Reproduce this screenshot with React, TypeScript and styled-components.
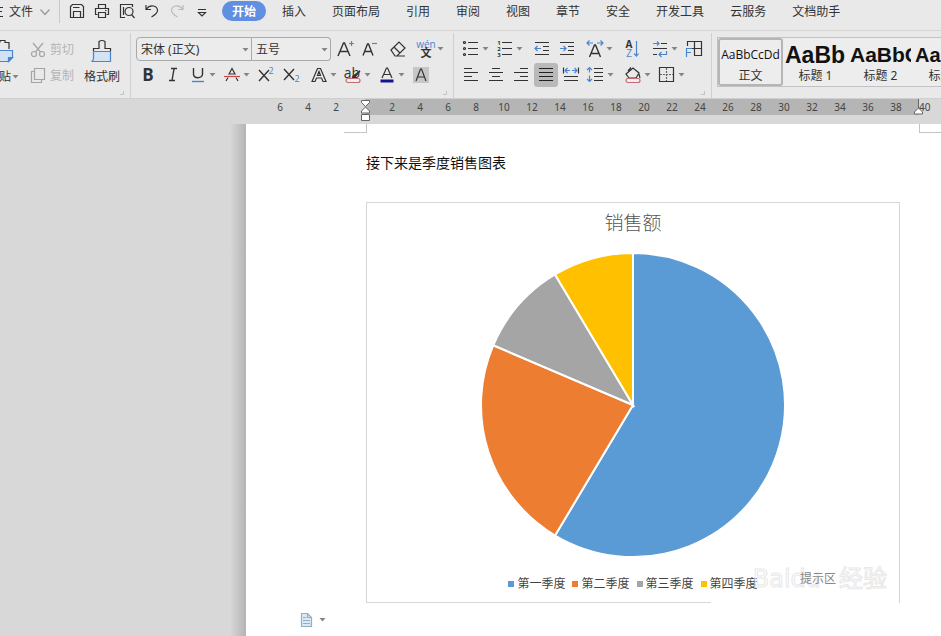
import React from "react";
import styled, { createGlobalStyle, css } from "styled-components";

const Global = createGlobalStyle`
  * { box-sizing: border-box; }
  html, body { margin: 0; height: 100%; }
  #root { height: 100%; }
  body, button, select { font-family: "Noto Sans", "Noto Sans CJK SC", sans-serif; font-size: 12px; color: #333; }
  button { margin: 0; padding: 0; border: 0; background: none; line-height: 16px; white-space: nowrap; }
`;

const Shell = styled.div`
  display: flex;
  flex-direction: column;
  min-height: 100%;
  overflow: hidden;
  background: #d8d8d8;
`;

const MenuBar = styled.nav`
  display: flex;
  align-items: center;
  height: 31px;
  padding-bottom: 8px;
  border-bottom: 1px solid #d6d6d6;
  background: #e9e9e9;
  flex: none;
`;

const FileButton = styled.button`
  display: flex;
  align-items: center;
  gap: 6px;
  width: 60px;
  height: 24px;
  flex: none;
  border-right: 1px solid #c9c9c9;
  overflow: hidden;
  justify-content: flex-end;
  padding: 1px 8px 0 0;
`;

const QuickTools = styled.div`
  display: flex;
  gap: 5px;
  padding-left: 7px;
  width: 162px;
  flex: none;
`;

const QuickButton = styled.button`
  width: 20px;
  height: 20px;
  flex: none;
`;

const Tabs = styled.div`
  display: flex;
  align-items: center;
  gap: 26px;
`;

const Tab = styled.button<{ $active?: boolean }>`
  flex: none;
  height: 20px;
  padding-top: 1px;
  ${(p) =>
    p.$active &&
    css`
      width: 44px;
      margin-right: -10px;
      border-radius: 10px;
      background: #5e8fe0;
      color: #fff;
      font-weight: 700;
    `}
`;

const Ribbon = styled.div`
  display: flex;
  height: 68px;
  flex: none;
  padding: 2px 0 0;
  background: #e9e9e9;
  border-bottom: 1px solid #cfcfcf;
  overflow: hidden;
`;

const Group = styled.section<{ $w: number }>`
  display: flex;
  flex: none;
  width: ${(p) => p.$w}px;
  position: relative;
  border-right: 1px solid #cfcfcf;
`;

const Corner = styled.span`
  position: absolute;
  right: 6px;
  bottom: 3px;
  width: 4px;
  height: 4px;
  border: solid #c4c4c4;
  border-width: 0 1px 1px 0;
`;

const PasteButton = styled.button`
  display: flex;
  flex-direction: column;
  align-items: flex-start;
  width: 20px;
  padding-top: 6px;
  gap: 6px;
  overflow: hidden;
`;

const PasteLabel = styled.span`
  display: flex;
  align-items: center;
  justify-content: flex-end;
  width: 20px;
`;

const ClipColumn = styled.div`
  display: flex;
  flex-direction: column;
  gap: 6px;
  padding: 6px 0 0 10px;
  width: 64px;
`;

const ClipButton = styled.button`
  display: flex;
  align-items: center;
  gap: 4px;
  height: 20px;
  padding-top: 2px;
  color: #b5b5b5;
`;

const BrushButton = styled.button`
  display: flex;
  flex-direction: column;
  align-items: center;
  gap: 6px;
  width: 36px;
  padding-top: 6px;
`;

const Rows = styled.div<{ $pad: number }>`
  display: flex;
  flex-direction: column;
  gap: 2px;
  padding: 4px 0 0 ${(p) => p.$pad}px;
`;

const ToolRow = styled.div<{ $pad?: number }>`
  display: flex;
  align-items: center;
  height: 24px;
  padding-left: ${(p) => p.$pad || 0}px;
`;

const Combo = styled.span<{ $w: number; $side: "left" | "right" }>`
  display: flex;
  align-items: center;
  width: ${(p) => p.$w}px;
  height: 24px;
  border: 1px solid #a9a9a9;
  border-radius: ${(p) => (p.$side === "left" ? "4px 0 0 4px" : "0 4px 4px 0")};
  border-left-width: ${(p) => (p.$side === "left" ? 1 : 0)}px;
  background: #ececec;
  padding: 1px 1px 0 0;
`;

const Select = styled.select`
  appearance: none;
  flex: 1;
  min-width: 0;
  height: 20px;
  padding: 0 0 0 4px;
  border: 0;
  background: transparent;
`;

const Tool = styled.button<{ $w: number }>`
  display: flex;
  align-items: center;
  flex: none;
  width: ${(p) => p.$w}px;
  height: 24px;
`;

const IconBox = styled.span<{ $on?: boolean }>`
  display: flex;
  flex: none;
  justify-content: center;
  align-items: center;
  width: ${(p) => (p.$on ? 24 : 20)}px;
  height: 24px;
  margin: ${(p) => (p.$on ? "0 -2px" : "0")};
  border-radius: 3px;
  background: ${(p) => (p.$on ? "#b9b9b9" : "transparent")};
`;

const Glyph = styled.svg`
  display: block;
  flex: none;
  overflow: visible;
`;

const Gallery = styled.div`
  display: flex;
  flex: none;
  height: 50px;
  margin: 4px 0 0 5px;
  border: solid #c2c2c2;
  border-width: 1px 0 1px 1px;
  background: #ededed;
`;

const StyleTile = styled.button<{ $active?: boolean }>`
  display: flex;
  flex-direction: column;
  align-items: center;
  justify-content: flex-end;
  flex: none;
  width: 65px;
  overflow: hidden;
  border: 2px solid ${(p) => (p.$active ? "#b5b5b5" : "transparent")};
  border-radius: 3px;
`;

const Sample = styled.span<{ $size: number; $bold?: boolean }>`
  display: flex;
  align-items: center;
  align-self: stretch;
  justify-content: ${(p) => (p.$bold ? "flex-start" : "center")};
  height: 26px;
  overflow: hidden;
  color: #111;
  font-family: ${(p) => (p.$bold ? '"Liberation Sans"' : '"Open Sans"')}, sans-serif;
  font-size: ${(p) => p.$size}px;
  font-weight: ${(p) => (p.$bold ? 700 : 400)};
`;

const Ruler = styled.div`
  display: flex;
  flex: none;
  height: 25px;
  padding-left: 266px;
  color: #444;
  font-size: 10px;
  line-height: 16px;
  overflow: hidden;
`;

const Band = styled.div<{ $dark?: boolean }>`
  display: flex;
  flex: none;
  position: relative;
  height: 16px;
  padding-left: ${(p) => (p.$dark ? 13 : 0)}px;
  width: ${(p) => (p.$dark ? 554 : 99)}px;
  background: ${(p) => (p.$dark ? "#b5b5b5" : "transparent")};
`;

const Mark = styled.span`
  flex: none;
  width: 28px;
  text-align: center;
`;

const IndentMarker = styled.svg<{ $end?: boolean }>`
  position: absolute;
  top: 0;
  left: ${(p) => (p.$end ? "auto" : "-5px")};
  right: ${(p) => (p.$end ? "-5px" : "auto")};
`;

const Desk = styled.main`
  display: flex;
  flex: 1;
  padding-left: 230px;
`;

const Shade = styled.div`
  flex: none;
  width: 16px;
  background: linear-gradient(to right, #d8d8d8, #b4b4b4);
`;

const Page = styled.article`
  display: flex;
  flex-direction: column;
  flex: 1;
  min-width: 0;
  min-height: 512px;
  background: #fff;
`;

const Crops = styled.div`
  display: flex;
  gap: 552px;
  height: 9px;
  padding-left: 98px;
  overflow: hidden;
`;

const Crop = styled.span<{ $right?: boolean }>`
  flex: none;
  width: 23px;
  border: solid #c4c4c4;
  border-width: ${(p) => (p.$right ? "0 0 1px 1px" : "0 1px 1px 0")};
`;

const Paragraph = styled.p`
  margin: 20px 0 0 120px;
  color: #111;
  font-family: "Liberation Serif", "Noto Sans CJK SC", sans-serif;
  font-size: 14px;
  line-height: 22px;
`;

const Chart = styled.figure`
  display: flex;
  flex-direction: column;
  align-items: center;
  position: relative;
  width: 534px;
  height: 401px;
  margin: 27px 0 0 120px;
  border: 1px solid #d6d6d6;
  &::after {
    content: "";
    position: absolute;
    right: 0;
    bottom: -1px;
    width: 188px;
    height: 1px;
    background: #fff;
  }
`;

const ChartTitle = styled.figcaption`
  margin-top: 7px;
  color: #555;
  font-size: 19px;
  font-weight: 300;
  line-height: 26px;
`;

const Pie = styled.svg`
  flex: none;
  margin-top: 16px;
`;

const Legend = styled.ul`
  display: flex;
  gap: 7px;
  margin: 16px 0 0;
  padding: 0;
  list-style: none;
  color: #444;
  line-height: 20px;
`;

const LegendItem = styled.li<{ $c: string }>`
  display: flex;
  align-items: center;
  gap: 3px;
  &::before {
    content: "";
    width: 6px;
    height: 6px;
    background: ${(p) => p.$c};
  }
`;

const Watermark = styled.span`
  display: flex;
  align-items: center;
  gap: 18px;
  position: absolute;
  right: 12px;
  bottom: 10px;
  color: transparent;
  -webkit-text-stroke: 1px #e8e8e8;
  font-family: "DejaVu Sans", "Noto Sans CJK SC", sans-serif;
  font-size: 24px;
  line-height: 26px;
`;

const AreaNote = styled.span`
  position: absolute;
  right: 63px;
  bottom: 15px;
  color: #888;
  line-height: 16px;
`;

const PasteOptions = styled.button`
  display: flex;
  align-items: center;
  gap: 4px;
  width: 27px;
  margin: 9px 0 0 54px;
`;

const K = "#333";
const B = "#4a86cf";

const Svg = ({ children, w = 20, h = 20 }: { children: React.ReactNode; w?: number; h?: number }) => (
  <Glyph width={w} height={h} viewBox={`0 0 ${w} ${h}`} fill="none" stroke={K} strokeWidth="1.2" aria-hidden="true">
    {children}
  </Glyph>
);

const Arrow = () => (
  <Glyph width="9" height="6" viewBox="0 0 9 6" aria-hidden="true">
    <path d="M1.500 1h6L4.500 4.500z" fill="#858585" />
  </Glyph>
);

const T = ({ x, y, s, c = K, b, children }: { x: number; y: number; s: number; c?: string; b?: boolean; children: string }) => (
  <text x={x} y={y} fontSize={s} fill={c} stroke="none" textAnchor="middle" fontWeight={b ? 700 : 400} fontFamily='"Open Sans", "Noto Sans CJK SC", sans-serif'>
    {children}
  </text>
);

const icons: Record<string, React.ReactNode> = {
  save: <><path d="M3.500 5.500l2-2h9l2 2v11h-13z" /><path d="M6.500 16v-5.500h7V16M6 6.500h6.500" /></>,
  print: <><path d="M6.500 7V3.500h7V7M5.500 13.500h-2V7.500h13v6h-2" /><path d="M6.500 11.500h7v5h-7zM13 9.500h1.500" /></>,
  preview: <><path d="M8 16.500H3.500v-13h12V6" /><circle cx="12" cy="10.500" r="4" /><path d="M14.500 13.500l3 3.500M6.500 6v8" /></>,
  undo: <path d="M4 4v4.500h5M4.500 8C8 3 15.500 4.500 15.500 9.500c0 3-3 4.500-6 6.500" />,
  redo: <path stroke="#bbb" d="M16 4v4.500h-5M15.500 8C12 3 4.500 4.500 4.500 9.500c0 3 3 4.500 6 6.500" />,
  more: <path d="M6 8.500h8M6.500 11.500l3.500 3.500 3.500-3.500z" />,
  cut: <g stroke="#a5a5a5"><circle cx="4" cy="14" r="2.500" /><circle cx="12" cy="14" r="2.500" /><path d="M3 3l7.500 9M13 3l-7.500 9" /></g>,
  copy: <g stroke="#a5a5a5"><path d="M4.500 2.500h10v11h-10z" /><path d="M4.500 5.500h-3v11h10v-3" /></g>,
  bold: <T x={10} y={16} s={17} b>B</T>,
  italic: <path strokeWidth="1.4" d="M8 3.500h6M6 15.500h6M11 4L9 15.500" />,
  underline: <><path strokeWidth="1.4" d="M5.500 3v6c0 5 9 5 9 0V3" /><path stroke={B} strokeWidth="1.400" d="M4 16.500h12" /></>,
  strike: <><path d="M4 16l2-3.500M16 16l-2-3.500M7 9L10 3.500 13 9z" /><path stroke="#d0494c" d="M2 11.500h16" /></>,
  sup: <><path strokeWidth="1.400" d="M3 5l10 11M13 5L3 16" /><T x={15} y={9} s={9} c={B}>2</T></>,
  sub: <><path strokeWidth="1.400" d="M3 4l10 11M13 4L3 15" /><T x={16} y={17} s={9} c={B}>2</T></>,
  outline: <path d="M3 16.500L8.500 3.500h3L17 16.500h-3L12.500 13h-5L6 16.500zM8.500 10.500h3L10 6.500z" />,
  highlight: <><T x={9} y={13} s={14}>ab</T><path d="M17 6l-6 7-2 1 1-3z" fill={K} /><rect x="3" y="13.500" width="14" height="4" rx="2" stroke="#c56b74" fill="#eee" /></>,
  color: <><path d="M5 13L9.500 3h1l4.500 10M7 9.500h6" /><path stroke="#14148c" strokeWidth="3" d="M3.500 16h13" /></>,
  shaded: <><rect x="2" y="2" width="16" height="16" fill="#c6c6c6" stroke="none" /><path d="M5 16L9.500 4h1L15 16M7 12h6" /></>,
  grow: <><path strokeWidth="1.400" d="M3 17L8.500 4h1L15 17M5 12.500h8" /><path stroke={B} d="M14 4.500h5M16.500 2v5" /></>,
  shrink: <><path strokeWidth="1.400" d="M3 16.500L7.500 5h1L13 16.500M5 12.500h6" /><path stroke={B} d="M12 4.500h5" /></>,
  eraser: <path d="M3 11l8-8 6 6-8 8H7zM6 8l6 6M8 17h9" />,
  pinyin: <><T x={10} y={9} s={10} c={B}>wén</T><T x={10} y={18} s={11} b>文</T></>,
  bullets: <><path d="M7 3.500h10M7 9.500h10M7 15.500h10" /><circle cx="3.500" cy="3.500" r="1" /><circle cx="3.500" cy="9.500" r="1" /><circle cx="3.500" cy="15.500" r="1" /></>,
  numbers: <><path d="M7 3.500h10M7 9.500h10M7 15.500h10" /><T x={4} y={6} s={6} b>1</T><T x={4} y={12} s={6} b>2</T><T x={4} y={18} s={6} b>3</T></>,
  outdent: <><path d="M3 3.500h14M11 7.500h6M11 11.500h6M3 15.500h14" /><path stroke={B} d="M9 9.500H3M5.500 7L3 9.500 5.500 12" /></>,
  indent: <><path d="M3 3.500h14M11 7.500h6M11 11.500h6M3 15.500h14" /><path stroke={B} d="M3 9.500h6M6.500 7L9 9.500 6.500 12" /></>,
  scale: <><path strokeWidth="1.400" d="M4.500 18L9.500 6h1l5 12M6.500 14.500h7" /><path stroke={B} d="M2 4h6M4.500 1.500L2 4l2.500 2.500M12 4h6M15.500 1.500L18 4l-2.500 2.500" /></>,
  sort: <><T x={7} y={9} s={10} b>A</T><T x={7} y={18} s={10} c={B}>Z</T><path stroke={B} d="M14.500 2v15M12 14.500l2.500 2.500 2-2.500" /></>,
  wrap: <><path d="M11 4.500h6M3 9.500h14M3 15.500h4" /><path stroke={B} d="M3 4.500h6M7 2.500l2 2-2 2M16.500 12v3.500H9M11.500 13L9 15.500l2.500 2.500" /></>,
  frame: <><path d="M3.500 7V2.500h14v14H10M8 9.500h9.500M10.500 2.500v14" /><path stroke={B} d="M2.500 18V9.500H8M2.500 13.500H7" /></>,
  left: <path d="M3 3.500h8M3 7.500h14M3 11.500h8M3 15.500h14" />,
  center: <path d="M6 3.500h8M3 7.500h14M6 11.500h8M3 15.500h14" />,
  right: <path d="M9 3.500h8M3 7.500h14M9 11.500h8M3 15.500h14" />,
  justify: <path stroke="#222" d="M3 3.500h14M3 7.500h14M3 11.500h14M3 15.500h14" />,
  distribute: <><path d="M2.500 2.500v6M17.500 2.500v6M3 11.500h14M3 15.500h14" /><path stroke={B} d="M4 5.500h5M6.500 3L4 5.500 6.500 8M11 5.500h5M13.500 3L16 5.500 13.500 8" /></>,
  spacing: <><path d="M8 3.500h9M8 7.500h9M8 11.500h9M8 15.500h9" /><path stroke={B} d="M3.500 2.500v5M1 5l2.500-2.500L6 5M3.500 10.500v6M1 14l2.500 2.500L6 14" /></>,
  shading: <><path d="M3 9l7-6 6 5-3 5H6zM8 2.500L5 6M16 9l1 4" /><rect x="3" y="13.500" width="14" height="4" rx="2" stroke="#c56b74" fill="#eee" /></>,
  border: <><path d="M2.500 2.500h14v14h-14z" /><path stroke="#666" strokeDasharray="2 1" d="M9.500 3v13M3 9.500h13" /></>,
};

type Item = [name: string, label: string, width: number, arrow?: boolean];

const fontTop: Item[] = [["grow", "增大字号", 25], ["shrink", "减小字号", 28], ["eraser", "清除格式", 28], ["pinyin", "拼音指南", 34, true]];
const fontBottom: Item[] = [
  ["bold", "加粗", 25], ["italic", "倾斜", 25], ["underline", "下划线", 34, true], ["strike", "删除线", 34, true], ["sup", "上标", 25],
  ["sub", "下标", 28], ["outline", "文字效果", 34, true], ["highlight", "突出显示", 34, true], ["color", "字体颜色", 34, true], ["shaded", "字符底纹", 20],
];
const paraTop: Item[] = [
  ["bullets", "项目符号", 34, true], ["numbers", "编号", 37, true], ["outdent", "减少缩进量", 25], ["indent", "增加缩进量", 28],
  ["scale", "中文版式", 37, true], ["sort", "排序", 28], ["wrap", "显示编辑标记", 34, true], ["frame", "制表位", 20],
];
const paraBottom: Item[] = [
  ["left", "左对齐", 25], ["center", "居中对齐", 25], ["right", "右对齐", 25], ["justify", "两端对齐", 25], ["distribute", "分散对齐", 25],
  ["spacing", "行距", 37, true], ["shading", "底纹颜色", 34, true], ["border", "边框", 34, true],
];

const Tools = ({ items }: { items: Item[] }) => (
  <>
    {items.map(([name, label, width, arrow]) => (
      <Tool key={name} $w={width} aria-label={label} aria-pressed={name === "justify" ? true : undefined}>
        <IconBox $on={name === "justify"}><Svg>{icons[name]}</Svg></IconBox>
        {arrow && <Arrow />}
      </Tool>
    ))}
  </>
);

const quick: [string, string][] = [["save", "保存"], ["print", "打印"], ["preview", "打印预览"], ["undo", "撤销"], ["redo", "恢复"], ["more", "更多"]];
const tabs = ["开始", "插入", "页面布局", "引用", "审阅", "视图", "章节", "安全", "开发工具", "云服务", "文档助手"];
const styles: [string, string, number][] = [["AaBbCcDd", "正文", 12], ["AaBb", "标题 1", 23], ["AaBbC", "标题 2", 21], ["AaBbC", "标题 3", 20]];
const marks = Array.from({ length: 19 }, (_, i) => (i + 1) * 2);

const data = [
  { label: "第一季度", value: 8.2, color: "#5b9bd5" },
  { label: "第二季度", value: 3.2, color: "#ed7d31" },
  { label: "第三季度", value: 1.4, color: "#a5a5a5" },
  { label: "第四季度", value: 1.2, color: "#ffc000" },
];

const slices = () => {
  const total = data.reduce((s, d) => s + d.value, 0);
  let a = 0;
  return data.map((d) => {
    const start = a;
    a += (d.value / total) * Math.PI * 2;
    const p = (t: number) => `${153 + 152 * Math.sin(t)} ${153 - 152 * Math.cos(t)}`;
    return <path key={d.label} fill={d.color} d={`M153 153L${p(start)}A152 152 0 ${a - start > Math.PI ? 1 : 0} 1 ${p(a)}Z`} />;
  });
};

export default function App() {
  return (
    <Shell>
      <Global />
      <MenuBar>
        <FileButton>
          <Svg w={12} h={12}><path d="M0 1.500h12M0 5.500h11M0 10.500h12" /></Svg>
          <span>文件</span>
          <Svg w={12} h={12}><path stroke="#999" d="M1.500 3.500L6 8.500l4.500-5" /></Svg>
        </FileButton>
        <QuickTools>
          {quick.map(([n, l]) => <QuickButton key={n} aria-label={l}><Svg>{icons[n]}</Svg></QuickButton>)}
        </QuickTools>
        <Tabs>
          {tabs.map((t, i) => <Tab key={t} $active={i === 0}>{t}</Tab>)}
        </Tabs>
      </MenuBar>
      <Ribbon>
        <Group $w={131}>
          <PasteButton aria-label="粘贴">
            <Svg w={14} h={24}>
              <path d="M0 3.500V1.500h5v2h4V10" />
              <path d="M0 11.500h12.500v7l-4 4H0" fill="#d3e2f5" stroke={B} />
              <path d="M8.500 22.500v-4h4z" fill={B} stroke={B} />
            </Svg>
            <PasteLabel>粘贴<Arrow /></PasteLabel>
          </PasteButton>
          <ClipColumn>
            <ClipButton><Svg w={16}>{icons.cut}</Svg>剪切</ClipButton>
            <ClipButton><Svg w={16}>{icons.copy}</Svg>复制</ClipButton>
          </ClipColumn>
          <BrushButton>
            <Svg w={22} h={24}>
              <path d="M2.500 12V9.500H8v-7q3-2 6 0v7h5.500V12" />
              <path d="M2.500 12.500h17v10H0.500q2-1 2-3z" fill="#d3e2f5" stroke={B} />
            </Svg>
            格式刷
          </BrushButton>
          <Corner />
        </Group>
        <Group $w={323}>
          <Rows $pad={5}>
            <ToolRow>
              <Combo $w={116} $side="left"><Select aria-label="字体"><option>宋体 (正文)</option></Select><Arrow /></Combo>
              <Combo $w={79} $side="right"><Select aria-label="字号"><option>五号</option></Select><Arrow /></Combo>
              <ToolRow $pad={4}><Tools items={fontTop} /></ToolRow>
            </ToolRow>
            <ToolRow $pad={2}><Tools items={fontBottom} /></ToolRow>
          </Rows>
          <Corner />
        </Group>
        <Group $w={258}>
          <Rows $pad={7}>
            <ToolRow><Tools items={paraTop} /></ToolRow>
            <ToolRow><Tools items={paraBottom} /></ToolRow>
          </Rows>
          <Corner />
        </Group>
        <Gallery>
          {styles.map(([s, l, size], i) => (
            <StyleTile key={l} $active={i === 0}>
              <Sample $size={size} $bold={i > 0}>{s}</Sample>
              {l}
            </StyleTile>
          ))}
        </Gallery>
      </Ribbon>
      <Ruler>
        <Band>{[6, 4, 2].map((n) => <Mark key={n}>{n}</Mark>)}</Band>
        <Band $dark>
          <IndentMarker width="11" height="23" viewBox="0 0 11 23" fill="#fff" stroke="#666">
            <path d="M1.500 1.500h8v2l-4 4-4-4zM5.500 8l4 4v2h-8v-2zM1.500 15.500h8v6h-8z" />
          </IndentMarker>
          {marks.map((n) => <Mark key={n}>{n}</Mark>)}
          <IndentMarker $end width="11" height="17" viewBox="0 0 11 17" fill="#fff" stroke="#666">
            <path d="M5.500 0v9l4 4v2h-8v-2l4-4" />
          </IndentMarker>
        </Band>
        <span>40</span>
      </Ruler>
      <Desk>
        <Shade />
        <Page>
          <Crops><Crop /><Crop $right /></Crops>
          <Paragraph>接下来是季度销售图表</Paragraph>
          <Chart>
            <ChartTitle>销售额</ChartTitle>
            <Pie width="306" height="306" viewBox="0 0 306 306" stroke="#fff" strokeWidth="2" role="img" aria-label="销售额">
              {slices()}
            </Pie>
            <Legend>{data.map((d) => <LegendItem key={d.label} $c={d.color}>{d.label}</LegendItem>)}</Legend>
            <Watermark><span>Baidu</span><span>经验</span></Watermark>
            <AreaNote>提示区</AreaNote>
          </Chart>
          <PasteOptions aria-label="粘贴选项">
            <Svg w={14} h={16}>
              <path d="M1.500 1.500h6l4 4v9h-10z" fill="#dce9f3" stroke="#8fb0c8" />
              <path d="M7.500 1.500v4h4M3 5.500h3M3 8.500h7M3 11.500h7" stroke="#8fb0c8" />
            </Svg>
            <Arrow />
          </PasteOptions>
        </Page>
      </Desk>
    </Shell>
  );
}
